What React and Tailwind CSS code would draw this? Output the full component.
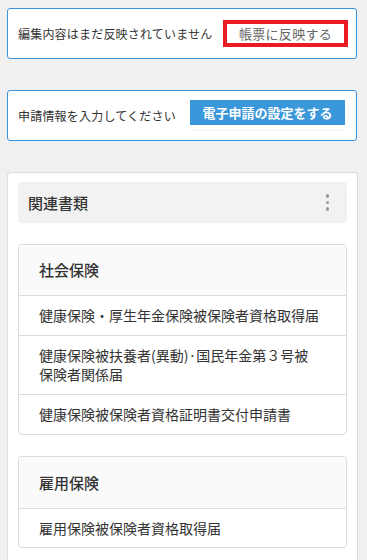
export default function App() {
  const font = { fontFamily: '"Noto Sans CJK JP", "Noto Sans", sans-serif' };
  return (
    <div className="min-h-[560px] w-[367px] bg-[#f0f0f0] pl-[7px] pr-[10px] pt-[8px] text-[#333]" style={font}>
      <div className="flex h-[51px] w-[350px] items-center justify-between rounded-[3px] border border-[#3b93dc] bg-white pl-[10px] pr-[8px]">
        <span className="text-[12px] leading-[16px] tracking-[0.2px] text-[#333]">編集内容はまだ反映されていません</span>
        <button className="flex h-[27px] w-[125px] items-center justify-center border-4 border-[#ea1b24] bg-white text-[13px] tracking-[0.3px] text-[#666]">
          帳票に反映する
        </button>
      </div>

      <div className="mt-[31px] flex h-[51px] w-[350px] items-center justify-between rounded-[3px] border border-[#3b93dc] bg-white pl-[10px] pr-[11px]">
        <span className="text-[12px] leading-[16px] tracking-[0.2px] text-[#333]">申請情報を入力してください</span>
        <div className="flex w-[156px] flex-col items-end">
          <button className="flex h-[25px] w-[155px] items-center justify-center bg-[#3a97da] text-[13px] font-bold text-white">
            電子申請の設定をする
          </button>
          <div className="mt-[5px] h-px w-full bg-[#f3f3f3]" />
        </div>
      </div>

      <div className="mt-[31px] w-[351px] rounded-t-[4px] border border-b-0 border-[#dcdcdc] bg-white px-[10px] pt-[9px] pb-[20px]">
        <div className="flex h-[41px] items-center justify-between rounded-[4px] bg-[#f2f2f2] pl-[10px] pr-[18px]">
          <span className="text-[15px] font-medium leading-[20px] text-[#333]">関連書類</span>
          <div className="flex flex-col gap-[3px]">
            <span className="block h-[3.5px] w-[3.5px] rounded-full bg-[#999]" />
            <span className="block h-[3.5px] w-[3.5px] rounded-full bg-[#999]" />
            <span className="block h-[3.5px] w-[3.5px] rounded-full bg-[#999]" />
          </div>
        </div>

        <div className="mt-[21px] overflow-hidden rounded-[4px] border border-[#dcdcdc]">
          <div className="flex h-[50px] items-center bg-[#fafafa] px-[20px] text-[15px] font-medium leading-[20px] text-[#333]">
            社会保険
          </div>
          <div className="border-t border-[#dcdcdc] px-[20px] py-[10px] text-[14px] leading-[19px] text-[#333]">
            健康保険・厚生年金保険被保険者資格取得届
          </div>
          <div className="border-t border-[#dcdcdc] px-[20px] py-[10px] text-[14px] leading-[19px] text-[#333]">
            健康保険被扶養者(異動)·国民年金第３号被
            <br />
            保険者関係届
          </div>
          <div className="border-t border-[#dcdcdc] px-[20px] py-[10px] text-[14px] leading-[19px] text-[#333]">
            健康保険被保険者資格証明書交付申請書
          </div>
        </div>

        <div className="mt-[21px] overflow-hidden rounded-[4px] border border-[#dcdcdc]">
          <div className="flex h-[51px] items-center bg-[#fafafa] px-[20px] text-[15px] font-medium leading-[20px] text-[#333]">
            雇用保険
          </div>
          <div className="border-t border-[#dcdcdc] px-[20px] py-[10px] text-[14px] leading-[18px] text-[#333]">
            雇用保険被保険者資格取得届
          </div>
        </div>
      </div>
    </div>
  );
}
